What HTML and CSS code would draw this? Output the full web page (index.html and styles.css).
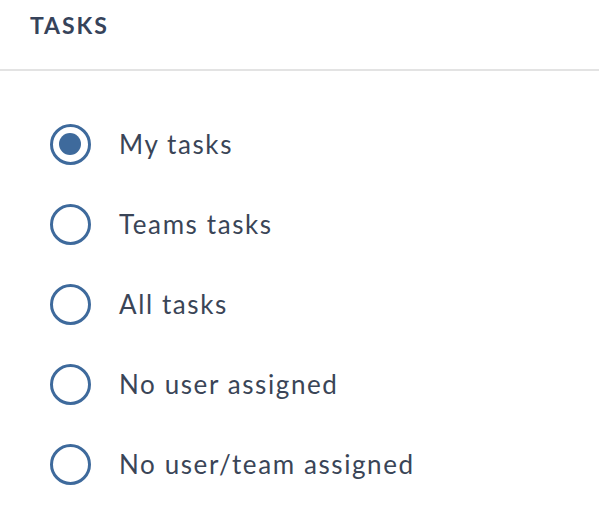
FILE: index.html
```html
<!DOCTYPE html>
<html lang="en">
<head>
  <meta charset="UTF-8" />
  <title>Tasks</title>
  <link rel="stylesheet" href="styles.css">
</head>
<body>
  <div class="panel">
    <h2 class="panel-title">TASKS</h2>

    <div class="options">
      <label class="option">
        <input type="radio" name="tasks" checked />
        <span class="radio"></span>
        <span class="option-label">My tasks</span>
      </label>
      <label class="option">
        <input type="radio" name="tasks" />
        <span class="radio"></span>
        <span class="option-label">Teams tasks</span>
      </label>
      <label class="option">
        <input type="radio" name="tasks" />
        <span class="radio"></span>
        <span class="option-label">All tasks</span>
      </label>
      <label class="option">
        <input type="radio" name="tasks" />
        <span class="radio"></span>
        <span class="option-label">No user assigned</span>
      </label>
      <label class="option">
        <input type="radio" name="tasks" />
        <span class="radio"></span>
        <span class="option-label">No user/team assigned</span>
      </label>
    </div>
  </div>
</body>
</html>
```

FILE: styles.css
```css
body {
  margin: 0;
  font-family: Lato, "Open Sans", sans-serif;
  background: #fff;
  color: #3a4557;
}
.panel {
  width: 599px;
}
.panel-title {
  margin: 0;
  padding: 12px 30px 0;
  height: 71px;
  box-sizing: border-box;
  font-size: 23px;
  font-weight: 700;
  letter-spacing: 1.9px;
  line-height: 26px;
  color: #36435a;
  border-bottom: 2px solid #e3e3e3;
}
.options {
  padding-top: 33px;
}
.option {
  display: flex;
  align-items: center;
  height: 80px;
  padding-left: 50px;
  cursor: pointer;
}
.option input {
  display: none;
}
.radio {
  width: 41px;
  height: 41px;
  box-sizing: border-box;
  border: 3.5px solid #3e6a9c;
  border-radius: 50%;
  position: relative;
  flex-shrink: 0;
}
.option input:checked + .radio::after {
  content: "";
  position: absolute;
  left: 6px;
  top: 6px;
  width: 22px;
  height: 22px;
  border-radius: 50%;
  background: #3e6a9c;
}
.option-label {
  margin-left: 28px;
  font-size: 26px;
  line-height: 30px;
  letter-spacing: 1.6px;
}
```
